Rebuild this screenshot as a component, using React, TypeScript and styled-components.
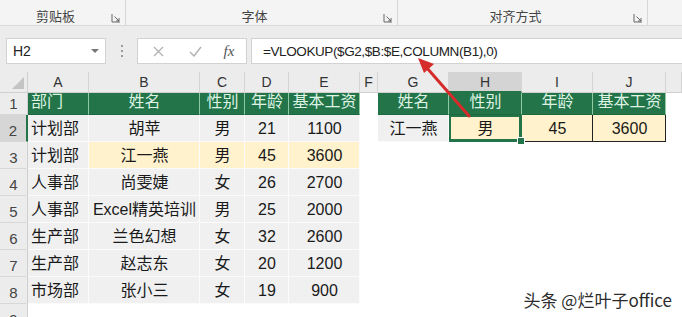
import styled, { createGlobalStyle } from 'styled-components';

const GlobalStyle = createGlobalStyle`
  html, body {
    margin: 0;
    padding: 0;
    background: #ffffff;
    overflow: hidden;
  }
  body {
    font-family: "Liberation Sans", "Noto Sans CJK SC", sans-serif;
  }
`;

const GREEN = '#237549';

const Page = styled.div`
  position: relative;
  width: 682px;
  height: 317px;
  overflow: hidden;
  background: #ffffff;
`;

/* ---------- ribbon ---------- */

const Ribbon = styled.div`
  display: flex;
  height: 25px;
  background: #f4f4f4;
  border-bottom: 1px solid #dadada;
  box-shadow: 0 1px 2px rgba(0, 0, 0, 0.08);
`;

const Group = styled.div<{ $w: number; $last?: boolean }>`
  display: flex;
  align-items: center;
  width: ${(p) => p.$w}px;
  flex: ${(p) => (p.$last ? 1 : 'none')};
  border-right: ${(p) => (p.$last ? 'none' : '1px solid #d6d6d6')};
  padding-right: 4px;
  box-sizing: border-box;
`;

const GroupLabel = styled.span`
  flex: 1;
  text-align: center;
  font-size: 13px;
  color: #444;
  padding-top: 6px;
`;

const Launcher = styled.svg`
  width: 10px;
  height: 10px;
  margin-top: 10px;
  flex: none;
`;

/* ---------- formula bar ---------- */

const FormulaBar = styled.div`
  display: flex;
  align-items: stretch;
  height: 26px;
  padding: 12px 0 8px 6px;
  background: #ececec;
`;

const NameBox = styled.div`
  display: flex;
  align-items: center;
  justify-content: space-between;
  width: 100px;
  box-sizing: border-box;
  padding: 0 6px 0 6px;
  background: #fff;
  border: 1px solid #d2d2d2;
  font-size: 14px;
  color: #222;
`;

const Caret = styled.span`
  width: 0;
  height: 0;
  border-left: 4px solid transparent;
  border-right: 4px solid transparent;
  border-top: 4px solid #777;
`;

const Dots = styled.div`
  display: flex;
  flex-direction: column;
  justify-content: center;
  gap: 3px;
  width: 31px;
  align-items: center;
`;

const Dot = styled.span`
  width: 2px;
  height: 2px;
  background: #9a9a9a;
`;

const ButtonBox = styled.div`
  display: flex;
  align-items: center;
  width: 110px;
  box-sizing: border-box;
  background: #fff;
  border: 1px solid #d2d2d2;
  margin-right: 4px;
`;

const BarButton = styled.span<{ $w: number }>`
  display: flex;
  align-items: center;
  justify-content: center;
  width: ${(p) => p.$w}px;
  color: #aaa;
`;

const Fx = styled.span`
  font-family: "Liberation Serif", serif;
  font-style: italic;
  font-size: 15px;
  color: #555;
`;

const FormulaInput = styled.div`
  flex: 1;
  display: flex;
  align-items: center;
  padding-left: 11px;
  background: #fff;
  border: 1px solid #d2d2d2;
  border-right: none;
  font-size: 13.5px;
  letter-spacing: -0.4px;
  color: #222;
  white-space: nowrap;
`;

/* ---------- sheet ---------- */

const Sheet = styled.div`
  display: grid;
  grid-template-columns: 28px 61px 111px 45px 44px 71px 18px 71px 73px 71px 73px 1fr;
  grid-template-rows: 21px 22px repeat(8, 27px);
`;

const Corner = styled.div`
  position: relative;
  background: #ececec;
  border-right: 1px solid #d0d0d0;
  border-bottom: 1px solid #d0d0d0;
  &::after {
    content: '';
    position: absolute;
    right: 3px;
    bottom: 3px;
    border-left: 12px solid transparent;
    border-bottom: 12px solid #c4c4c4;
  }
`;

const ColHead = styled.div<{ $active?: boolean }>`
  display: flex;
  align-items: center;
  justify-content: center;
  font-size: 14px;
  color: #333;
  background: ${(p) => (p.$active ? '#d4d4d4' : '#ececec')};
  border-right: 1px solid #d4d4d4;
  border-bottom: ${(p) => (p.$active ? `2px solid ${GREEN}` : '1px solid #d0d0d0')};
`;

const RowHead = styled.div<{ $active?: boolean }>`
  display: flex;
  align-items: flex-end;
  justify-content: center;
  padding-bottom: 2px;
  box-sizing: border-box;
  font-size: 15px;
  color: #444;
  background: ${(p) => (p.$active ? '#d6d6d6' : '#ececec')};
  border-right: ${(p) => (p.$active ? `2px solid ${GREEN}` : '1px solid #d0d0d0')};
  border-bottom: 1px solid #d8d8d8;
`;

type Kind = 'head' | 'data' | 'pick' | 'result' | 'empty';

const bg: Record<Kind, string> = {
  head: GREEN,
  data: '#f0f0f0',
  pick: '#fff2cc',
  result: '#fff2cc',
  empty: '#ffffff',
};

const Cell = styled.div<{ $kind: Kind; $left?: boolean; $selected?: boolean }>`
  position: relative;
  display: flex;
  align-items: flex-end;
  justify-content: ${(p) => (p.$left ? 'flex-start' : 'center')};
  padding: 0 2px 3px 3px;
  box-sizing: border-box;
  font-size: 16px;
  line-height: 18px;
  white-space: nowrap;
  color: ${(p) => (p.$kind === 'head' ? '#dff3e5' : '#1a1a1a')};
  background: ${(p) => bg[p.$kind]};
  border-right: 1px solid
    ${(p) =>
      p.$kind === 'head' ? '#8fcaa4' : p.$kind === 'result' ? '#222' : p.$kind === 'empty' ? 'transparent' : '#fbfbfb'};
  border-bottom: 1px solid
    ${(p) =>
      p.$kind === 'head' ? '#1d6a41' : p.$kind === 'result' ? '#222' : p.$kind === 'empty' ? 'transparent' : '#fbfbfb'};
  ${(p) =>
    p.$selected &&
    `
    box-shadow: inset 0 0 0 2px ${GREEN};
    border-right: 1px solid ${GREEN};
    border-bottom: 1px solid ${GREEN};
    &::after {
      content: '';
      position: absolute;
      right: -4px;
      bottom: -4px;
      width: 6px;
      height: 6px;
      background: ${GREEN};
      border: 1px solid #fff;
      z-index: 2;
    }
  `}
`;

/* ---------- overlays ---------- */

const Arrow = styled.svg`
  position: absolute;
  left: 0;
  top: 0;
  width: 682px;
  height: 317px;
  pointer-events: none;
`;

const Watermark = styled.div`
  position: absolute;
  right: 10px;
  bottom: 7px;
  font-family: "Noto Sans CJK SC", sans-serif;
  font-size: 17px;
  line-height: 20px;
  color: #2b2b2b;
  text-shadow: 0 0 2px #fff, 0 0 2px #fff;
`;

const columns = ['A', 'B', 'C', 'D', 'E', 'F', 'G', 'H', 'I', 'J', ''];

const employees = [
  ['计划部', '胡苹', '男', '21', '1100'],
  ['计划部', '江一燕', '男', '45', '3600'],
  ['人事部', '尚雯婕', '女', '26', '2700'],
  ['人事部', 'Excel精英培训', '男', '25', '2000'],
  ['生产部', '兰色幻想', '女', '32', '2600'],
  ['生产部', '赵志东', '女', '20', '1200'],
  ['市场部', '张小三', '女', '19', '900'],
];

const headers = ['部门', '姓名', '性别', '年龄', '基本工资'];

function LauncherIcon() {
  return (
    <Launcher viewBox="0 0 10 10">
      <path d="M1 1v8h8" fill="none" stroke="#666" strokeWidth="1" />
      <path d="M3.5 3.5l4.5 4.5M8 5v3H5" fill="none" stroke="#666" strokeWidth="1" />
    </Launcher>
  );
}

export default function App() {
  const rows: { kind: Kind; text: string; left?: boolean; selected?: boolean }[][] = [];

  // row 1: headers
  rows.push([
    ...headers.map((h, i) => ({ kind: 'head' as Kind, text: h, left: i === 0 })),
    { kind: 'empty', text: '' },
    { kind: 'head', text: '姓名' },
    { kind: 'head', text: '性别' },
    { kind: 'head', text: '年龄' },
    { kind: 'head', text: '基本工资' },
    { kind: 'empty', text: '' },
  ]);

  employees.forEach((emp, r) => {
    const left = emp.map((t, i) => ({
      kind: (r === 1 && i > 0 ? 'pick' : 'data') as Kind,
      text: t,
      left: i === 0,
    }));
    const right =
      r === 0
        ? [
            { kind: 'data' as Kind, text: '江一燕' },
            { kind: 'pick' as Kind, text: '男', selected: true },
            { kind: 'result' as Kind, text: '45' },
            { kind: 'result' as Kind, text: '3600' },
            { kind: 'empty' as Kind, text: '' },
          ]
        : Array.from({ length: 5 }, () => ({ kind: 'empty' as Kind, text: '' }));
    rows.push([...left, { kind: 'empty', text: '' }, ...right]);
  });

  rows.push(Array.from({ length: 11 }, () => ({ kind: 'empty' as Kind, text: '' })));

  return (
    <Page>
      <GlobalStyle />
      <Ribbon>
        <Group $w={126}>
          <GroupLabel>剪贴板</GroupLabel>
          <LauncherIcon />
        </Group>
        <Group $w={272}>
          <GroupLabel>字体</GroupLabel>
          <LauncherIcon />
        </Group>
        <Group $w={250}>
          <GroupLabel>对齐方式</GroupLabel>
          <LauncherIcon />
        </Group>
        <Group $w={34} $last />
      </Ribbon>

      <FormulaBar>
        <NameBox>
          H2
          <Caret />
        </NameBox>
        <Dots>
          <Dot />
          <Dot />
          <Dot />
        </Dots>
        <ButtonBox>
          <BarButton $w={40}>
            <svg width="11" height="11" viewBox="0 0 11 11">
              <path d="M1 1l9 9M10 1l-9 9" stroke="#b0b0b0" strokeWidth="1.2" />
            </svg>
          </BarButton>
          <BarButton $w={34}>
            <svg width="13" height="11" viewBox="0 0 13 11">
              <path d="M1 6l4 4 7-9" fill="none" stroke="#b0b0b0" strokeWidth="1.4" />
            </svg>
          </BarButton>
          <BarButton $w={34}>
            <Fx>fx</Fx>
          </BarButton>
        </ButtonBox>
        <FormulaInput>=VLOOKUP($G2,$B:$E,COLUMN(B1),0)</FormulaInput>
      </FormulaBar>

      <Sheet>
        <Corner />
        {columns.map((c) => (
          <ColHead key={c || 'k'} $active={c === 'H'}>
            {c}
          </ColHead>
        ))}
        {rows.map((row, r) => [
          <RowHead key={`h${r}`} $active={r === 1}>
            {r + 1}
          </RowHead>,
          ...row.map((cell, c) => (
            <Cell key={`${r}-${c}`} $kind={cell.kind} $left={cell.left} $selected={cell.selected}>
              {cell.text}
            </Cell>
          )),
        ])}
      </Sheet>

      <Arrow viewBox="0 0 682 317">
        <line x1="469" y1="116" x2="427" y2="68" stroke="#d62b2b" strokeWidth="3" strokeLinecap="round" />
        <polygon points="418,58 434,64 424,73" fill="#d62b2b" />
      </Arrow>

      <Watermark>头条 @烂叶子office</Watermark>
    </Page>
  );
}
